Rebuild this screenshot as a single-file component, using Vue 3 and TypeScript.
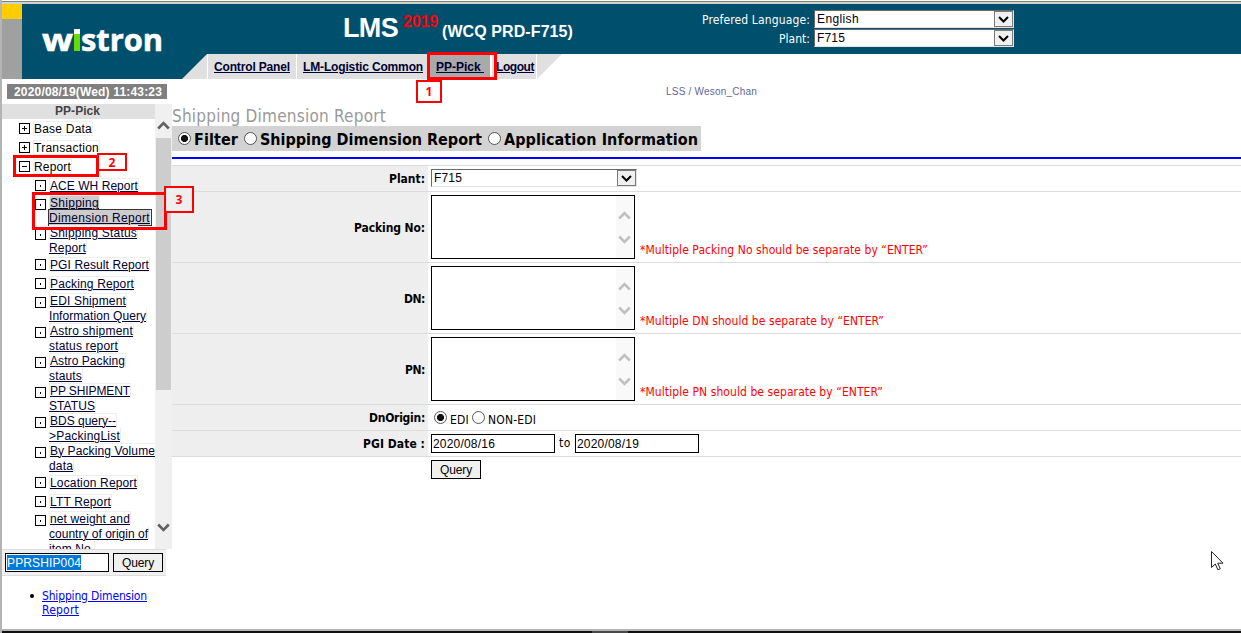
<script setup lang="ts">
interface FitBinding { value: number }
interface TextLine { text: string; width: number }
interface TreeItem { lines: TextLine[]; active?: boolean }

// Spreads the letters of a label so that it takes up the given width.
const vFit = {
  mounted(el: HTMLElement, binding: FitBinding) {
    const count = (el.textContent ?? '').length
    const natural = el.getBoundingClientRect().width
    if (count > 0) el.style.letterSpacing = `${(binding.value - natural) / count}px`
  },
}

const line = (text: string, width: number): TextLine => ({ text, width })

const roots = [
  { text: 'Base Data', width: 58, open: false },
  { text: 'Transaction', width: 65, open: false },
  { text: 'Report', width: 37, open: true },
]

const reports: TreeItem[] = [
  { lines: [line('ACE WH Report', 88)] },
  { lines: [line('Shipping', 49), line('Dimension Report', 101)], active: true },
  { lines: [line('Shipping Status', 87), line('Report', 37)] },
  { lines: [line('PGI Result Report', 99)] },
  { lines: [line('Packing Report', 84)] },
  { lines: [line('EDI Shipment', 76), line('Information Query', 97)] },
  { lines: [line('Astro shipment', 83), line('status report', 69)] },
  { lines: [line('Astro Packing', 75), line('stauts', 33)] },
  { lines: [line('PP SHIPMENT', 80), line('STATUS', 46)] },
  { lines: [line('BDS query--', 66), line('>PackingList', 71)] },
  { lines: [line('By Packing Volume', 105), line('data', 24)] },
  { lines: [line('Location Report', 87)] },
  { lines: [line('LTT Report', 61)] },
  { lines: [line('net weight and', 80), line('country of origin of', 99), line('item No.', 45)] },
]

const areas = [
  { label: 'Packing No:', labelWidth: 71, note: '*Multiple Packing No should be separate by “ENTER”', width: 288 },
  { label: 'DN:', labelWidth: 21, note: '*Multiple DN should be separate by “ENTER”', width: 244 },
  { label: 'PN:', labelWidth: 20, note: '*Multiple PN should be separate by “ENTER”', width: 243 },
]
</script>

<template>
  <div class="page">
    <div class="frame-top"></div>
    <header class="banner">
      <div class="stripe"><i></i></div>
      <svg class="logo" width="124" height="26" viewBox="0 0 124 26">
        <text x="0" y="23" textLength="31" lengthAdjust="spacingAndGlyphs">w</text>
        <text x="31" y="23" class="logo-i">i</text>
        <rect x="32" y="1" width="6" height="5" fill="#fff" />
        <rect x="32" y="6" width="6" height="17" fill="#66dc00" />
        <text x="39" y="23" textLength="82" lengthAdjust="spacingAndGlyphs">stron</text>
      </svg>
      <h1 class="system">
        <span v-fit="55" class="lms">LMS</span>
        <span v-fit="35" class="year">2019</span>
        <span v-fit="131" class="site">(WCQ PRD-F715)</span>
      </h1>
      <div class="prefs">
        <div class="pref"><span v-fit="108">Prefered Language:</span>
          <div class="select"><span v-fit="42">English</span><b><svg width="11" height="7" viewBox="0 0 11 7"><path d="M1 1l4.5 4.5L10 1" /></svg></b></div>
        </div>
        <div class="pref"><span v-fit="31">Plant:</span>
          <div class="select"><span v-fit="28">F715</span><b><svg width="11" height="7" viewBox="0 0 11 7"><path d="M1 1l4.5 4.5L10 1" /></svg></b></div>
        </div>
      </div>
    </header>

    <nav class="tabs">
      <div class="tab-gray"></div>
      <div class="tab-teal"></div>
      <svg width="25" height="25"><rect width="25" height="25" fill="#00506d" /><path d="M25 0V25H0z" fill="#e0e0e0" /></svg>
      <a class="tab t1"><span v-fit="76">Control Panel</span></a>
      <a class="tab t2"><span v-fit="120">LM-Logistic Common</span></a>
      <a class="tab t3"><span v-fit="48">PP-Pick&nbsp;</span></a>
      <a class="tab t4"><span v-fit="38">Logout</span></a>
      <svg class="tail" width="25" height="25"><path d="M0 0H25L0 25z" fill="#e0e0e0" /></svg>
    </nav>

    <div class="body">
      <aside class="side">
        <div class="clock"><span v-fit="148">2020/08/19(Wed) 11:43:23</span></div>
        <div class="tree-wrap">
          <div class="tree">
            <div class="tree-title"><span v-fit="45">PP-Pick</span></div>
            <div v-for="r in roots" :key="r.text" class="row root">
              <span class="box"><svg width="9" height="9"><path :d="r.open ? 'M2 4.5h5' : 'M2 4.5h5M4.5 2v5'" /></svg></span>
              <div class="text single"><div class="line"><span v-fit="r.width">{{ r.text }}</span></div></div>
            </div>
            <div v-for="(item, i) in reports" :key="i" class="row leaf">
              <span class="box"><svg width="9" height="9"><path d="M4.5 4v2" /></svg></span>
              <div class="text" :class="{ single: item.lines.length === 1, active: item.active }">
                <div v-for="l in item.lines" :key="l.text" class="line"><span v-fit="l.width">{{ l.text }}</span></div>
              </div>
            </div>
          </div>
          <div class="scroll">
            <svg width="13" height="9" viewBox="0 0 13 9"><path d="M1.200 7.500L6.500 2.200l5.300 5.300" /></svg>
            <div class="thumb"></div>
            <svg class="down" width="13" height="9" viewBox="0 0 13 9"><path d="M1.200 1.500L6.500 6.800l5.300-5.300" /></svg>
          </div>
        </div>
        <div class="search">
          <div class="field code"><span v-fit="74">PPRSHIP004</span></div>
          <button class="btn"><span v-fit="32">Query</span></button>
        </div>
        <div class="result">
          <i></i>
          <div><a v-fit="105">Shipping Dimension</a><br><a v-fit="37">Report</a></div>
        </div>
      </aside>

      <main class="main">
        <div class="user"><span v-fit="91">LSS / Weson_Chan</span></div>
        <h2 class="title"><span v-fit="214">Shipping Dimension Report</span></h2>
        <div class="modes">
          <i class="radio on"></i><span v-fit="44" class="m1">Filter</span>
          <i class="radio"></i><span v-fit="222" class="m2">Shipping Dimension Report</span>
          <i class="radio"></i><span v-fit="194">Application Information</span>
        </div>
        <div class="rule"></div>
        <div class="form">
          <div class="frow">
            <div class="label"><span v-fit="36">Plant:</span></div>
            <div class="cell"><div class="select wide"><span v-fit="28">F715</span><b><svg width="11" height="7" viewBox="0 0 11 7"><path d="M1 1l4.5 4.5L10 1" /></svg></b></div></div>
          </div>
          <div v-for="a in areas" :key="a.label" class="frow tall">
            <div class="label"><span v-fit="a.labelWidth">{{ a.label }}</span></div>
            <div class="cell">
              <div class="area">
                <div class="area-scroll">
                  <svg width="13" height="9" viewBox="0 0 13 9"><path d="M1.200 7.500L6.500 2.200l5.300 5.300" /></svg>
                  <svg width="13" height="9" viewBox="0 0 13 9"><path d="M1.200 1.500L6.500 6.800l5.300-5.300" /></svg>
                </div>
              </div>
              <div class="note"><span v-fit="a.width">{{ a.note }}</span></div>
            </div>
          </div>
          <div class="frow">
            <div class="label"><span v-fit="56">DnOrigin:</span></div>
            <div class="cell origin">
              <i class="radio on"></i><span v-fit="19">EDI</span>
              <i class="radio"></i><span v-fit="48">NON-EDI</span>
            </div>
          </div>
          <div class="frow last">
            <div class="label"><span v-fit="62">PGI Date :</span></div>
            <div class="cell dates">
              <div class="field date"><span v-fit="62">2020/08/16</span></div>
              <span v-fit="12" class="to">to</span>
              <div class="field date"><span v-fit="62">2020/08/19</span></div>
            </div>
          </div>
          <button class="btn submit"><span v-fit="32">Query</span></button>
        </div>
      </main>
    </div>

    <div class="frame-bottom"><i></i></div>

    <div class="mark a1"></div><div class="tag n1">1</div>
    <div class="mark a2"></div><div class="tag n2">2</div>
    <div class="mark a3"></div><div class="tag n3">3</div>
    <svg class="cursor" width="13" height="20" viewBox="0 0 13 20"><path d="M.5.500V16.500L4.300 13l2.600 5.800 2.400-1-2.600-5.600h5.300z" fill="#fff" stroke="#223" /></svg>
  </div>
</template>

<style>
html, body { margin: 0; background: #fff; overflow: hidden; }
</style>

<style scoped>
* { box-sizing: border-box; }
.page {
  --tahoma: "DejaVu Sans Condensed", "DejaVu Sans", sans-serif;
  position: relative; width: 1241px; height: 633px; overflow: hidden;
  display: flex; flex-direction: column; background: #fff;
  border-left: 2px solid #b4b4b4;
  font: 12px/15px "Liberation Sans", Arial, sans-serif; color: #000;
}
span, a { display: inline-block; white-space: nowrap; flex-shrink: 0; }
svg { display: block; flex-shrink: 0; }
.frame-top { height: 4px; flex-shrink: 0; background: #d0d0d0; border-top: 1px solid #fafaf5; box-shadow: inset 0 1px #7e857a; }
.banner { height: 50px; flex-shrink: 0; background: #00506d; display: flex; align-items: flex-start; color: #fff; }
.stripe { width: 20px; height: 50px; background: #a0a0a0; }
.stripe i { display: block; height: 15px; background: #fc0; }
.logo { margin: 24px 0 0 20px; overflow: visible; }
.logo text { font: bold 31px "Open Sans", sans-serif; fill: #fff; stroke: #fff; stroke-width: .6px; }
.logo .logo-i { font-size: 22px; fill: #66dc00; stroke: none; }
.system { margin: 0 0 0 177px; height: 50px; width: 359px; display: flex; align-items: baseline; font-size: 16px; line-height: 48px; }
.lms { font-size: 27px; margin-right: 5px; }
.year { color: #f00; transform: translateY(-10px); margin-right: 4px; font-size: 16px; }
.site { font-size: 16px; }
.prefs { width: 312px; padding-top: 6px; display: flex; flex-direction: column; gap: 1px; }
.pref { height: 18px; display: flex; justify-content: flex-end; align-items: center; gap: 4px; font-family: var(--tahoma); line-height: 18px; }
.pref > span { padding-top: 2px; }
.select { width: 200px; height: 18px; border: 1px solid #696969; border-right-color: #e3e3e3; border-bottom-color: #e3e3e3; background: #fff; color: #000; display: flex; align-items: center; justify-content: space-between; padding-left: 2px; font-family: "Liberation Sans", sans-serif; line-height: 16px; }
.select span { padding-top: 1px; line-height: 15px; }
.select b { width: 19px; height: 16px; border: 1px solid #7a7a7a; background: #f0f0f0; display: flex; align-items: center; justify-content: center; }
.select path { fill: none; stroke: #000; stroke-width: 2; }

.tabs { height: 25px; flex-shrink: 0; display: flex; }
.tab-gray { width: 20px; background: #a0a0a0; }
.tab-teal { width: 160px; background: #00506d; }
.tab { height: 25px; background: #e0e0e0; border-left: 1px solid #fff; font-weight: bold; line-height: 25px; color: #003; }
.tab span { line-height: 27px; height: 25px; text-decoration: underline; text-decoration-thickness: 1px; text-underline-offset: 1px; }
.t1 { width: 89px; padding-left: 6px; }
.t2 { width: 131px; padding-left: 6px; }
.t3 { width: 63px; padding-left: 8px; background: #a9a9a9; }
.t4 { width: 46px; padding-left: 4px; border-left-width: 2px; }
.tail { margin-left: 1px; }

.body { flex: 1; min-height: 0; display: flex; }
.side { width: 170px; padding-top: 5px; }
.clock { margin-left: 5px; width: 160px; height: 15px; padding-left: 7px; background: gray; color: #fff; font-weight: bold; line-height: 17px; }
.tree-wrap { margin-top: 5px; height: 445px; display: flex; overflow: hidden; }
.tree { width: 153px; height: 445px; overflow: hidden; }
.tree-title { height: 15px; background: #e0e0e0; text-align: center; padding-right: 2px; font-weight: bold; color: #444; }
.row { display: flex; align-items: flex-start; }
.root { padding-left: 17px; }
.leaf { padding-left: 33px; }
.box { width: 11px; height: 11px; margin: 4px 3px 0 0; border: 1px solid #000; }
.box path { fill: none; stroke: #000; }
.text.single { padding: 2px 0; }
.line { width: max-content; height: 15px; border-right: 1px solid #eee; }
.line span { line-height: 17px; }
.line:first-child { border-left: 1px solid #eee; box-shadow: inset 0 1px #eee; }
.single .line { box-shadow: inset 0 1px #eee, inset 0 -1px #eee; }
.leaf .line span { color: #003; text-decoration: underline; text-underline-offset: 1px; text-decoration-thickness: 1px; }
.active .line { background: #ccc; }
.active .line:last-child { outline: 1px solid #333; outline-offset: 0; }
.scroll { width: 17px; background: #f0f0f0; padding: 17px 1px 0; display: flex; flex-direction: column; align-items: center; }
.scroll path { fill: none; stroke: #606060; stroke-width: 2.6; }
.thumb { width: 15px; height: 252px; margin-top: 8px; background: #cdcdcd; }
.scroll .down { margin-top: 133px; }
.search { width: 164px; height: 27px; padding: 3px 3px 0; display: flex; gap: 4px; background: #f0f0f0; border-top: 1px solid #ddd; border-bottom: 1px solid #ddd; }
.field { height: 19px; border: 1px solid #000; background: #fff; padding: 1px; line-height: 17px; }
.field span { height: 15px; vertical-align: top; }
.code { width: 104px; }
.code span { background: #0078d7; color: #fff; }
.btn { width: 50px; height: 19px; padding: 1px 0 0; border: 1px solid #000; border-radius: 0; background: #f0f0f0; color: #000; font: inherit; line-height: 16px; text-align: center; }
.result { display: flex; margin: 13px 0 0 28px; font: 12px/14px var(--tahoma); color: #00f; }
.result i { width: 4px; height: 4px; margin: 5px 8px 0 0; border-radius: 50%; background: #000; }
.result a { text-decoration: underline; text-underline-offset: 1px; vertical-align: top; }

.main { flex: 1; min-width: 0; }
.user { height: 27px; padding: 5px 0 0 494px; font-size: 10px; color: #669; }
.title { margin: 0; height: 20px; font: 17px/20px var(--tahoma); color: #999; }
.modes { width: 529px; height: 25px; padding-left: 6px; background: #d3d3d3; display: flex; align-items: center; font: bold 16px/25px var(--tahoma); }
.modes span { padding-top: 1px; }
.radio { width: 13px; height: 13px; flex-shrink: 0; border: 1px solid #555; border-radius: 50%; background: #fff; }
.radio.on { background: radial-gradient(circle, #111 3.2px, #fff 3.9px); }
.modes .radio { margin-right: 3px; }
.m1, .m2 { margin-right: 6px; }
.rule { margin-top: 6px; height: 2px; background: #00f; }
.form { margin-top: 6px; font-family: var(--tahoma); }
.frow { display: flex; height: 26px; border-top: 1px solid #dcdcdc; }
.frow.tall { height: 71px; }
.frow.last { height: 27px; border-bottom: 1px solid #dcdcdc; }
.label { width: 256px; padding: 2px 3px 0 0; background: #eee; display: flex; justify-content: flex-end; align-items: center; font-weight: bold; }
.cell { flex: 1; padding: 3px 0 0 3px; display: flex; }
.wide { width: 206px; }
.area { width: 204px; height: 64px; border: 1px solid #000; display: flex; justify-content: flex-end; padding-right: 1px; }
.area-scroll { width: 17px; background: #f9f9f9; display: flex; flex-direction: column; justify-content: space-between; align-items: center; padding: 15px 0 14px; }
.area-scroll path { fill: none; stroke: #c0c0c0; stroke-width: 2.6; }
.note { align-self: flex-end; margin: 0 0 4px 5px; color: #f00; }
.origin { align-items: center; padding-left: 6px; padding-top: 0; }
.origin span { padding-top: 5px; }
.origin .radio { margin-right: 3px; margin-top: 0; }
.origin span + .radio { margin-left: 3px; }
.date { width: 124px; font-family: "Liberation Sans", sans-serif; }
.to { margin: 2px 4px 0; }
.submit { display: block; margin: 3px 0 0 259px; font: 12px/16px "Liberation Sans", sans-serif; }

.frame-bottom { height: 4px; flex-shrink: 0; background: #111; border-top: 2px solid #b4b4b4; }
.frame-bottom i { display: block; width: 36px; height: 2px; margin-left: 590px; background: #484848; }

.mark { position: absolute; border: 3px solid #f00; }
.tag { position: absolute; border: 2px solid #f00; background: #fff; color: #f00; font: bold 12px "Open Sans", sans-serif; display: flex; align-items: center; justify-content: center; }
.a1 { left: 425px; top: 52px; width: 70px; height: 28px; }
.n1 { left: 414px; top: 80px; width: 26px; height: 23px; }
.a2 { left: 11px; top: 155px; width: 86px; height: 22px; }
.n2 { left: 95px; top: 153px; width: 30px; height: 18px; }
.a3 { left: 30px; top: 192px; width: 135px; height: 38px; }
.n3 { left: 162px; top: 186px; width: 30px; height: 27px; background: #eee; }
.cursor { position: absolute; left: 1209px; top: 551px; }
</style>
